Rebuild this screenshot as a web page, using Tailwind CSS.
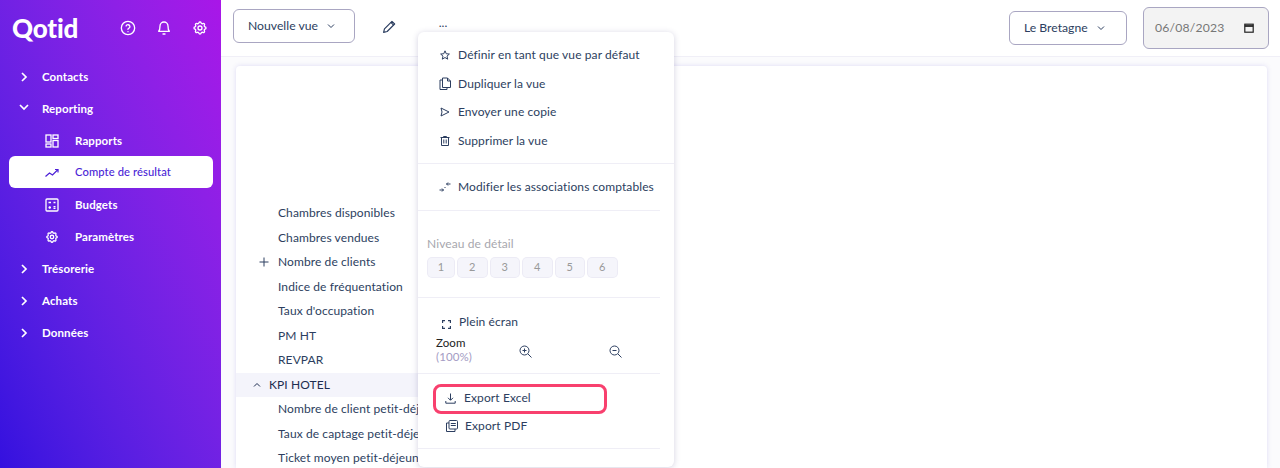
<!DOCTYPE html>
<html lang="fr">
<head>
    <meta charset="UTF-8">
    <title>Qotid - Compte de résultat</title>
    <script src="https://cdn.jsdelivr.net/npm/@tailwindcss/browser@4"></script>
</head>
<body class="h-[468px] overflow-hidden bg-white font-['Lato',sans-serif] text-[#2c3e60]">
    <div class="flex h-[468px]">
        <!-- Sidebar -->
        <aside class="w-[221px] shrink-0 bg-gradient-to-tr from-[#3410df] to-[#a916e8] text-white">
            <div class="flex h-[54px] items-center pl-3 pt-0.5">
                <span class="w-[92px] text-[26px] leading-none font-black tracking-[-0.2px]">Qotid</span>
                <div class="flex items-center gap-[20px] pl-4">
                    <svg class="h-4 w-4" viewBox="0 0 24 24" fill="none" stroke="currentColor" stroke-width="2" stroke-linecap="round" stroke-linejoin="round"><circle cx="12" cy="12" r="10"/><path d="M9.100 9a3 3 0 0 1 5.800 1c0 2-3 2.500-3 4"/><path d="M12 17.500h.01"/></svg>
                    <svg class="h-4 w-4" viewBox="0 0 24 24" fill="none" stroke="currentColor" stroke-width="2" stroke-linecap="round" stroke-linejoin="round"><path d="M6 9a6 6 0 0 1 12 0c0 6 2 8 2 8H4s2-2 2-8"/><path d="M10.500 21h3"/></svg>
                    <svg class="h-4 w-4" viewBox="0 0 24 24" fill="none" stroke="currentColor" stroke-width="2" stroke-linecap="round" stroke-linejoin="round"><path d="M10.325 4.317c.426-1.756 2.924-1.756 3.350 0a1.724 1.724 0 002.573 1.066c1.543-.94 3.310.826 2.370 2.370a1.724 1.724 0 001.065 2.572c1.756.426 1.756 2.924 0 3.350a1.724 1.724 0 00-1.066 2.573c.94 1.543-.826 3.310-2.370 2.370a1.724 1.724 0 00-2.572 1.065c-.426 1.756-2.924 1.756-3.350 0a1.724 1.724 0 00-2.573-1.066c-1.543.94-3.310-.826-2.370-2.370a1.724 1.724 0 00-1.065-2.572c-1.756-.426-1.756-2.924 0-3.350a1.724 1.724 0 001.066-2.573c-.94-1.543.826-3.310 2.370-2.370.996.608 2.296.07 2.572-1.065z"/><circle cx="12" cy="12" r="3"/></svg>
                </div>
            </div>
            <nav class="mt-[6px] flex flex-col text-[11.500px] font-bold tracking-[0.1px]">
                <div class="flex h-8 items-center pt-px pl-[19px]">
                    <svg class="h-2.5 w-2.5" viewBox="0 0 10 10" fill="none" stroke="currentColor" stroke-width="1.700"><path d="M3 1l4 4-4 4"/></svg>
                    <span class="ml-[13px]">Contacts</span>
                </div>
                <div class="flex h-8 items-center pt-px pl-[19px]">
                    <svg class="mb-1 h-2.5 w-2.5" viewBox="0 0 10 10" fill="none" stroke="currentColor" stroke-width="1.700"><path d="M1 3l4 4 4-4"/></svg>
                    <span class="ml-[13px]">Reporting</span>
                </div>
                <div class="flex h-8 items-center pt-px pl-[45px]">
                    <svg class="h-[14px] w-[14px]" viewBox="0 0 14 14" fill="none" stroke="currentColor" stroke-width="1.300"><rect x="1" y="1" width="5" height="7"/><rect x="8" y="1" width="5" height="3.500"/><rect x="1" y="10" width="5" height="3"/><rect x="8" y="6.500" width="5" height="6.500"/></svg>
                    <span class="ml-4">Rapports</span>
                </div>
                <div class="mr-2 ml-[9px] flex h-8 items-center rounded-md bg-white pt-px pl-[36px] text-[11.200px] font-medium text-[#4b1fd6]">
                    <svg class="h-[14px] w-[14px]" viewBox="0 0 14 14" fill="none" stroke="currentColor" stroke-width="1.200"><path d="M0.500 10.500l4-3.500 3 2 5.500-5.500"/><path d="M10 3.500h3v3"/></svg>
                    <span class="ml-4">Compte de résultat</span>
                </div>
                <div class="flex h-8 items-center pt-px pl-[45px]">
                    <svg class="h-[14px] w-[14px]" viewBox="0 0 14 14" fill="none" stroke="currentColor" stroke-width="1.300"><rect x="1" y="1" width="12" height="12" rx="1"/><path d="M3.500 4.500h2.500M8.500 4.500h2M3.500 9.500h2.500M4.700 8.300v2.400M8.500 8.700h2M8.500 10.400h2"/></svg>
                    <span class="ml-4">Budgets</span>
                </div>
                <div class="flex h-8 items-center pt-px pl-[45px]">
                    <svg class="h-[14px] w-[14px]" viewBox="0 0 24 24" fill="none" stroke="currentColor" stroke-width="2.200" stroke-linejoin="round"><path d="M10.325 4.317c.426-1.756 2.924-1.756 3.350 0a1.724 1.724 0 002.573 1.066c1.543-.94 3.310.826 2.370 2.370a1.724 1.724 0 001.065 2.572c1.756.426 1.756 2.924 0 3.350a1.724 1.724 0 00-1.066 2.573c.94 1.543-.826 3.310-2.370 2.370a1.724 1.724 0 00-2.572 1.065c-.426 1.756-2.924 1.756-3.350 0a1.724 1.724 0 00-2.573-1.066c-1.543.94-3.310-.826-2.370-2.370a1.724 1.724 0 00-1.065-2.572c-1.756-.426-1.756-2.924 0-3.350a1.724 1.724 0 001.066-2.573c-.94-1.543.826-3.310 2.370-2.370.996.608 2.296.07 2.572-1.065z"/><circle cx="12" cy="12" r="3"/></svg>
                    <span class="ml-4">Paramètres</span>
                </div>
                <div class="flex h-8 items-center pt-px pl-[19px]">
                    <svg class="h-2.5 w-2.5" viewBox="0 0 10 10" fill="none" stroke="currentColor" stroke-width="1.700"><path d="M3 1l4 4-4 4"/></svg>
                    <span class="ml-[13px]">Trésorerie</span>
                </div>
                <div class="flex h-8 items-center pt-px pl-[19px]">
                    <svg class="h-2.5 w-2.5" viewBox="0 0 10 10" fill="none" stroke="currentColor" stroke-width="1.700"><path d="M3 1l4 4-4 4"/></svg>
                    <span class="ml-[13px]">Achats</span>
                </div>
                <div class="flex h-8 items-center pt-px pl-[19px]">
                    <svg class="h-2.5 w-2.5" viewBox="0 0 10 10" fill="none" stroke="currentColor" stroke-width="1.700"><path d="M3 1l4 4-4 4"/></svg>
                    <span class="ml-[13px]">Données</span>
                </div>
            </nav>
        </aside>

        <!-- Main -->
        <div class="relative flex min-w-0 flex-1 flex-col bg-[#fbfbfd]">
            <header class="flex h-[57px] shrink-0 items-start border-b border-[#f0eff7] bg-white pl-3 text-[12.200px]">
                <div class="mt-[9px] flex h-[34px] w-[122px] items-center gap-[9px] rounded-md border border-[#a9a6c2] pl-[14px]">
                    <span>Nouvelle vue</span>
                    <svg class="h-2 w-2" viewBox="0 0 8 8" fill="none" stroke="currentColor"><path d="M1 2.500l3 3 3-3"/></svg>
                </div>
                <svg class="mt-[19px] ml-[27px] h-[15px] w-[15px]" viewBox="0 0 14 14" fill="none" stroke="#2c3e60" stroke-width="1.100" stroke-linejoin="round"><path d="M1.500 12.500l.8-3.300 7-7 2.500 2.500-7 7z"/><path d="M8.300 3.200l2.500 2.500"/></svg>
                <span class="mt-[19px] ml-[38px] h-[14px] w-4 text-center text-[12px] leading-[8px]">...</span>
                <div class="mt-[11px] ml-auto flex h-[34px] w-[118px] items-center gap-[9px] rounded-md border border-[#a9a6c2] pl-[14px]">
                    <span>Le Bretagne</span>
                    <svg class="h-2 w-2" viewBox="0 0 8 8" fill="none" stroke="currentColor"><path d="M1 2.500l3 3 3-3"/></svg>
                </div>
                <div class="mt-[7px] mr-[11px] ml-4 flex h-[42px] w-[126px] items-center justify-between rounded-md border border-[#a9a6c2] bg-[#f3f3f3] pr-[14px] pl-[11px] tracking-[0.2px] text-[#777]">
                    <span>06/08/2023</span>
                    <svg class="h-[10px] w-[10px] text-[#222]" viewBox="0 0 10 10" fill="none" stroke="currentColor" stroke-width="1.200"><rect x="0.800" y="1.200" width="8.400" height="8"/><path d="M0.800 3h8.400" stroke-width="1.800"/></svg>
                </div>
            </header>

            <!-- Card with the table rows -->
            <div class="mt-[9px] mr-[13px] ml-[15px] min-h-0 flex-1 overflow-hidden rounded-t-sm bg-white pt-[135px] text-[12px] tracking-[0.1px] shadow-[0_0_5px_rgba(90,80,200,0.18)]">
                <div class="w-[200px] whitespace-nowrap">
                    <div class="flex h-[24.500px] items-center pl-[42px]">Chambres disponibles</div>
                    <div class="flex h-[24.500px] items-center pl-[42px]">Chambres vendues</div>
                    <div class="flex h-[24.500px] items-center pl-[23px]">
                        <svg class="mr-[9px] h-[10px] w-[10px]" viewBox="0 0 10 10" fill="none" stroke="currentColor"><path d="M5 0.500v9M0.500 5h9"/></svg>
                        <span>Nombre de clients</span>
                    </div>
                    <div class="flex h-[24.500px] items-center pl-[42px]">Indice de fréquentation</div>
                    <div class="flex h-[24.500px] items-center pl-[42px]">Taux d'occupation</div>
                    <div class="flex h-[24.500px] items-center pl-[42px]">PM HT</div>
                    <div class="flex h-[24.500px] items-center pl-[42px]">REVPAR</div>
                    <div class="flex h-[24.500px] items-center bg-[#f4f4fb] pl-[17px] text-[#1e2d50]">
                        <svg class="mr-2 h-2 w-2" viewBox="0 0 8 8" fill="none" stroke="currentColor"><path d="M1 5.500l3-3 3 3"/></svg>
                        <span>KPI HOTEL</span>
                    </div>
                    <div class="flex h-[24.500px] items-center pl-[42px]">Nombre de client petit-déjeuner</div>
                    <div class="flex h-[24.500px] items-center pl-[42px]">Taux de captage petit-déjeuner</div>
                    <div class="flex h-[24.500px] items-center pl-[42px]">Ticket moyen petit-déjeuner</div>
                </div>
            </div>

            <!-- Dropdown menu -->
            <div class="absolute top-[32px] left-[197px] h-[435px] w-[256px] rounded-md bg-white text-[12px] tracking-[0.1px] shadow-[0_1px_6px_rgba(60,50,120,0.22)]">
                <div class="flex flex-col pt-[9px]">
                    <div class="flex h-[28.500px] items-center pl-[22px]">
                        <svg class="mr-2 h-[10px] w-[10px]" viewBox="0 0 24 24" fill="none" stroke="currentColor" stroke-width="2.400" stroke-linejoin="round"><path d="M12 2l3 7 7.500.7-5.700 5 1.700 7.300-6.500-3.900L5.500 22l1.700-7.300-5.700-5L9 9z"/></svg>
                        <span>Définir en tant que vue par défaut</span>
                    </div>
                    <div class="flex h-[28.500px] items-center pl-[21px]">
                        <svg class="mr-[7px] h-[13px] w-[12px]" viewBox="0 0 12 13" fill="none" stroke="currentColor" stroke-linejoin="round"><path d="M3.500 1h5l3 3v6.500h-8z"/><path d="M8.500 1v3h3"/><path d="M3.500 3H1v9.500h7v-2"/></svg>
                        <span>Dupliquer la vue</span>
                    </div>
                    <div class="flex h-[28.500px] items-center pl-[22px]">
                        <svg class="mr-2 h-[10px] w-[10px]" viewBox="0 0 10 10" fill="none" stroke="currentColor" stroke-linejoin="round"><path d="M1 1l8 4-8 4 1-4z"/></svg>
                        <span>Envoyer une copie</span>
                    </div>
                    <div class="flex h-[28.500px] items-center pl-[22px]">
                        <svg class="mr-2 h-[10px] w-[10px]" viewBox="0 0 10 10" fill="none" stroke="currentColor"><path d="M0.500 1.500h9M1.500 1.500v8h7v-8M3.800 3.500v4M6.200 3.500v4M3.500 1.500v-1h3v1"/></svg>
                        <span>Supprimer la vue</span>
                    </div>
                </div>
                <div class="mt-[8px] h-px bg-[#efeef6]"></div>
                <div class="flex h-[46px] items-center pl-[21px]">
                    <svg class="mr-[7px] h-[12px] w-[12px]" viewBox="0 0 12 12" fill="none" stroke="currentColor"><path d="M0.500 9h4M3 7.500L4.500 9 3 10.500M11.500 3h-4M9 1.500L7.500 3 9 4.500M5.500 7l1-1"/></svg>
                    <span>Modifier les associations comptables</span>
                </div>
                <div class="mr-[14px] h-px bg-[#efeef6]"></div>
                <div class="pt-[25px] pl-[9px] text-[#a7a7ae]">
                    <div class="h-[22px] leading-[16px]">Niveau de détail</div>
                    <div class="flex gap-1 pl-px text-[11px] text-[#999]">
                        <span class="flex h-[19px] w-[26px] items-center justify-center rounded bg-[#f5f5fb] ring-1 ring-[#ecebf5]">1</span>
                        <span class="flex h-[19px] w-[28.500px] items-center justify-center rounded bg-[#f5f5fb] ring-1 ring-[#ecebf5]">2</span>
                        <span class="flex h-[19px] w-[28.500px] items-center justify-center rounded bg-[#f5f5fb] ring-1 ring-[#ecebf5]">3</span>
                        <span class="flex h-[19px] w-[28.500px] items-center justify-center rounded bg-[#f5f5fb] ring-1 ring-[#ecebf5]">4</span>
                        <span class="flex h-[19px] w-[28.500px] items-center justify-center rounded bg-[#f5f5fb] ring-1 ring-[#ecebf5]">5</span>
                        <span class="flex h-[19px] w-[28.500px] items-center justify-center rounded bg-[#f5f5fb] ring-1 ring-[#ecebf5]">6</span>
                    </div>
                </div>
                <div class="mt-[20px] mr-[14px] h-px bg-[#efeef6]"></div>
                <div class="flex h-[36px] items-end pb-[3px] pl-[24px]">
                    <svg class="mr-2 mb-[2px] h-[9px] w-[9px]" viewBox="0 0 9 9" fill="none" stroke="currentColor" stroke-width="1.300"><path d="M0.500 3V0.500H3M6 0.500h2.500V3M8.500 6v2.500H6M3 8.500H0.500V6"/></svg>
                    <span>Plein écran</span>
                </div>
                <div class="flex h-[39px] items-start pl-[18px]">
                    <div class="w-[83px] pt-[2px] text-[11.500px] leading-[14px]">
                        <div class="text-[#222]">Zoom</div>
                        <div class="text-[#a49cc4]">(100%)</div>
                    </div>
                    <svg class="mt-[11px] h-[13px] w-[13px]" viewBox="0 0 13 13" fill="none" stroke="currentColor"><circle cx="5.500" cy="5.500" r="4.500"/><path d="M9 9l3.500 3.500M3.500 5.500h4M5.500 3.500v4"/></svg>
                    <svg class="mt-[11px] ml-[77px] h-[13px] w-[13px]" viewBox="0 0 13 13" fill="none" stroke="currentColor"><circle cx="5.500" cy="5.500" r="4.500"/><path d="M9 9l3.500 3.500M3.500 5.500h4"/></svg>
                </div>
                <div class="mr-[14px] h-px bg-[#efeef6]"></div>
                <div class="mt-[10px] ml-[15px] flex h-[30px] w-[174px] items-center rounded-lg border-[3px] border-[#f8406e] pb-0.5 pl-[9px]">
                    <svg class="mr-2 h-[11px] w-[11px]" viewBox="0 0 11 11" fill="none" stroke="currentColor"><path d="M5.500 0.500v6.500M3 4.800L5.500 7.300 8 4.800M0.800 8v2.200h9.400V8"/></svg>
                    <span>Export Excel</span>
                </div>
                <div class="ml-[28px] flex h-[24px] items-center">
                    <svg class="mr-[7px] h-[12px] w-[12px]" viewBox="0 0 12 12" fill="none" stroke="currentColor"><rect x="3" y="0.500" width="8.500" height="8.500" rx="1"/><path d="M3 3H0.500v8.500H9V9M4.800 3.500h5M4.800 5.500h5"/></svg>
                    <span>Export PDF</span>
                </div>
                <div class="mt-[10px] mr-[14px] h-px bg-[#efeef6]"></div>
            </div>
        </div>
    </div>
</body>
</html>
